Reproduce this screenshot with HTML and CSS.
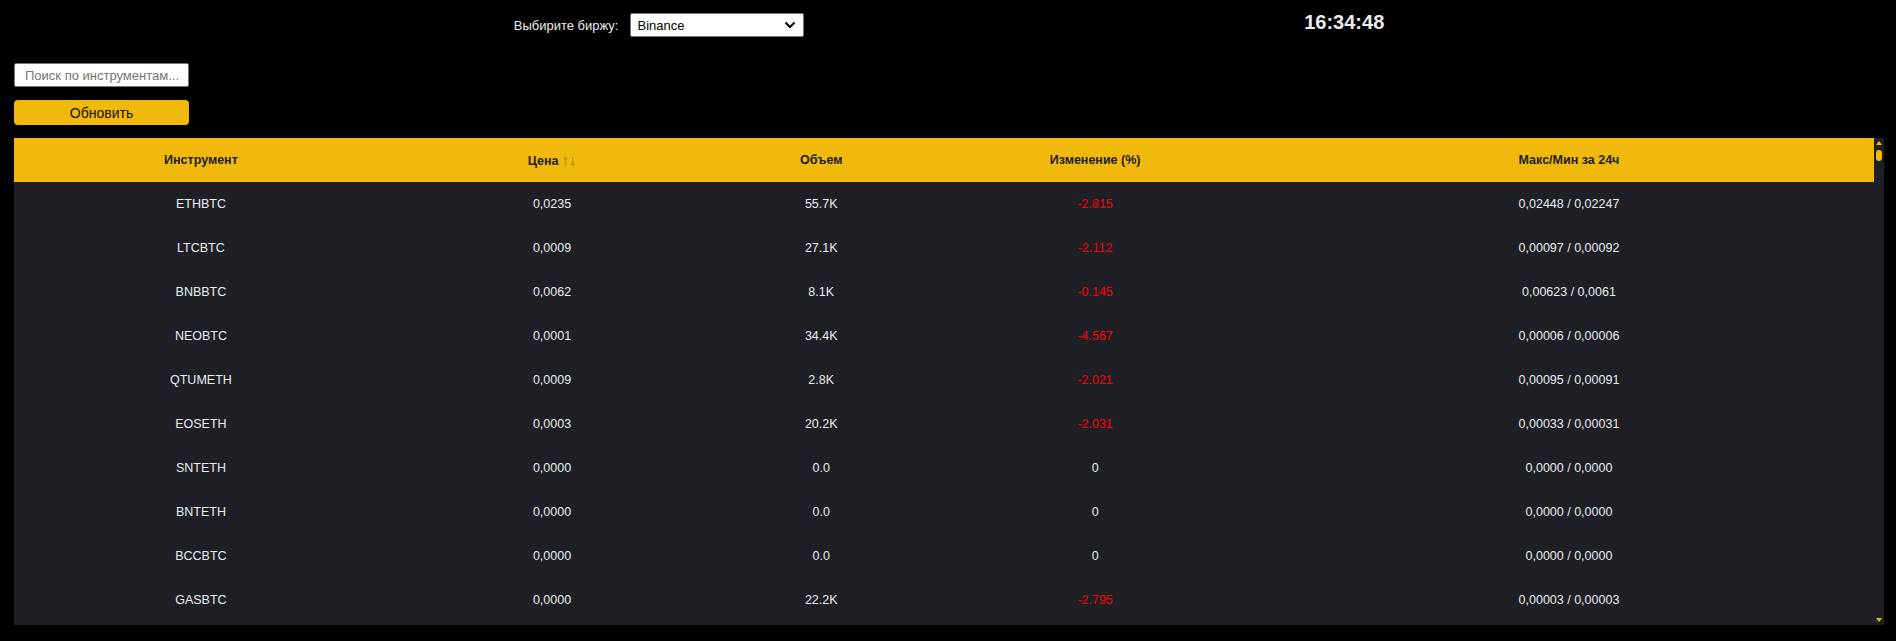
FILE: index.html
```html
<!DOCTYPE html>
<html lang="ru">
<head>
<meta charset="utf-8">
<title>Биржа</title>
<link rel="stylesheet" href="styles.css">
</head>
<body>
<div class="page">
  <header class="topbar">
    <div class="exchange">
      <label class="exchange-label" for="exchange">Выбирите биржу:</label>
      <div class="select-wrap">
        <select id="exchange" class="exchange-select">
          <option>Binance</option>
          <option>Bybit</option>
          <option>OKX</option>
        </select>
        <svg class="select-arrow" width="12" height="8" viewBox="0 0 12 8"><path d="M1.5 1.5 L6 6 L10.5 1.5" fill="none" stroke="#000" stroke-width="2"/></svg>
      </div>
    </div>
    <div class="clock">16:34:48</div>
  </header>

  <div class="controls">
    <input class="search" type="text" placeholder="Поиск по инструментам...">
    <button class="refresh" type="button">Обновить</button>
  </div>

  <div class="table-wrap">
    <div class="table-scroll">
      <table class="quotes">
        <thead>
          <tr>
            <th class="c-sym">Инструмент</th>
            <th class="c-price">Цена <span class="sort">↑↓</span></th>
            <th class="c-vol">Объем</th>
            <th class="c-chg">Изменение (%)</th>
            <th class="c-range">Макс/Мин за 24ч</th>
          </tr>
        </thead>
        <tbody>
          <tr><td>ETHBTC</td><td>0,0235</td><td>55.7K</td><td class="neg">-2.815</td><td>0,02448 / 0,02247</td></tr>
          <tr><td>LTCBTC</td><td>0,0009</td><td>27.1K</td><td class="neg">-2.112</td><td>0,00097 / 0,00092</td></tr>
          <tr><td>BNBBTC</td><td>0,0062</td><td>8.1K</td><td class="neg">-0.145</td><td>0,00623 / 0,0061</td></tr>
          <tr><td>NEOBTC</td><td>0,0001</td><td>34.4K</td><td class="neg">-4.567</td><td>0,00006 / 0,00006</td></tr>
          <tr><td>QTUMETH</td><td>0,0009</td><td>2.8K</td><td class="neg">-2.021</td><td>0,00095 / 0,00091</td></tr>
          <tr><td>EOSETH</td><td>0,0003</td><td>20.2K</td><td class="neg">-2.031</td><td>0,00033 / 0,00031</td></tr>
          <tr><td>SNTETH</td><td>0,0000</td><td>0.0</td><td>0</td><td>0,0000 / 0,0000</td></tr>
          <tr><td>BNTETH</td><td>0,0000</td><td>0.0</td><td>0</td><td>0,0000 / 0,0000</td></tr>
          <tr><td>BCCBTC</td><td>0,0000</td><td>0.0</td><td>0</td><td>0,0000 / 0,0000</td></tr>
          <tr><td>GASBTC</td><td>0,0000</td><td>22.2K</td><td class="neg">-2.795</td><td>0,00003 / 0,00003</td></tr>
        </tbody>
      </table>
    </div>
    <div class="scrollbar" aria-hidden="true">
      <span class="sb-up"></span>
      <span class="sb-thumb"></span>
      <span class="sb-down"></span>
    </div>
  </div>
</div>
</body>
</html>
```

FILE: styles.css
```css
* { box-sizing: border-box; }

html, body {
  margin: 0;
  background: #000;
}

body {
  font-family: "Liberation Sans", Arial, sans-serif;
  color: #eaecef;
}

.page {
  padding: 0 12px 0 14px;
}

.topbar {
  display: flex;
  justify-content: space-evenly;
  align-items: flex-start;
  padding-top: 11px;
}

.exchange {
  display: flex;
  align-items: center;
  gap: 12px;
  margin-top: 2px;
}

.exchange-label {
  font-size: 13px;
  color: #eaecef;
}

.select-wrap {
  position: relative;
  width: 174px;
  height: 24px;
}

.exchange-select {
  appearance: none;
  -webkit-appearance: none;
  width: 100%;
  height: 100%;
  margin: 0;
  padding: 0 24px 0 6px;
  border: 1px solid #767676;
  border-radius: 2px;
  background: #fff;
  color: #000;
  font-family: "Liberation Sans", Arial, sans-serif;
  font-size: 13px;
}

.select-arrow {
  position: absolute;
  right: 8px;
  top: 8px;
  pointer-events: none;
}

.clock {
  font-size: 20px;
  line-height: 23px;
  font-weight: bold;
  color: #eaecef;
}

.controls {
  display: flex;
  flex-direction: column;
  align-items: flex-start;
  gap: 13px;
  margin-top: 26px;
}

.search {
  width: 175px;
  height: 24px;
  margin: 0;
  padding: 0 10px;
  border: 1px solid #767676;
  border-radius: 2px;
  background: #fff;
  color: #000;
  font-family: "Liberation Sans", Arial, sans-serif;
  font-size: 13px;
  outline: none;
}

.search::placeholder {
  color: #757575;
}

.refresh {
  width: 175px;
  height: 25px;
  margin: 0;
  padding: 0;
  border: none;
  border-radius: 4px;
  background: #f0b90b;
  color: #111;
  font-family: "Liberation Sans", Arial, sans-serif;
  font-size: 14px;
  cursor: pointer;
}

.table-wrap {
  display: flex;
  margin-top: 13px;
  height: 487px;
  background: #1e2026;
}

.table-scroll {
  flex: 1;
  min-width: 0;
  overflow: hidden;
}

.quotes {
  width: 100%;
  border-collapse: collapse;
  table-layout: fixed;
}

.quotes th,
.quotes td {
  height: 44px;
  padding: 0 8px;
  text-align: center;
  vertical-align: middle;
  font-size: 12.5px;
}

.quotes th {
  background: #f0b90b;
  color: #1e2026;
  font-weight: bold;
  font-size: 12.5px;
}

.quotes td {
  color: #eaecef;
}

.c-sym { width: 20.1%; }
.c-price { width: 17.65%; }
.c-vol { width: 11.3%; }
.c-chg { width: 18.15%; }
.c-range { width: 32.8%; }

.sort {
  color: #9c6d08;
  font-weight: normal;
  font-size: 14.5px;
}

.quotes td.neg {
  color: #ff0000;
}

.scrollbar {
  width: 10px;
  display: flex;
  flex-direction: column;
  align-items: center;
  padding: 3px 0;
  background: #1e2026;
}

.sb-up {
  width: 0;
  height: 0;
  border-left: 3px solid transparent;
  border-right: 3px solid transparent;
  border-bottom: 4px solid #f0b90b;
}

.sb-thumb {
  margin-top: 5px;
  width: 6px;
  height: 11px;
  border-radius: 3px;
  background: #f0b90b;
}

.sb-down {
  margin-top: auto;
  width: 0;
  height: 0;
  border-left: 3px solid transparent;
  border-right: 3px solid transparent;
  border-top: 4px solid #f0b90b;
}
```
